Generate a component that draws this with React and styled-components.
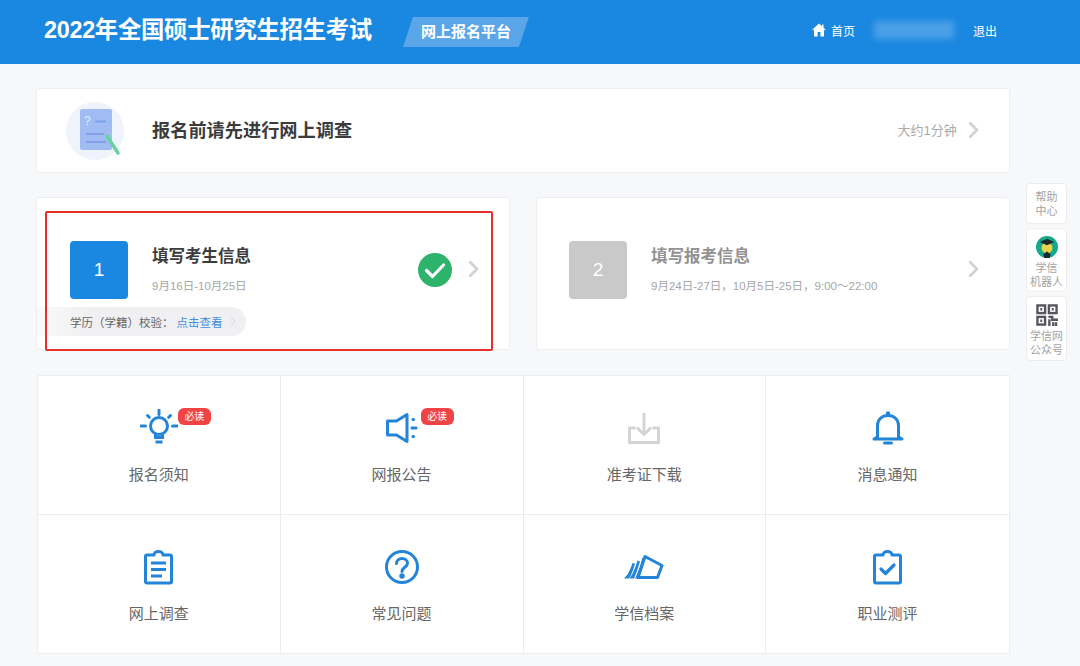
import React from 'react';
import styled, { createGlobalStyle } from 'styled-components';

const GlobalStyle = createGlobalStyle`
  * { box-sizing: border-box; }
  html, body { margin: 0; padding: 0; }
  body {
    background: #f7f8fa;
    color: #333;
    font-family: "Liberation Sans", "Noto Sans CJK SC", sans-serif;
  }
`;

const Page = styled.div`
  width: 1080px;
  height: 666px;
  overflow: hidden;
`;

const Header = styled.header`
  height: 64px;
  background: #1a87e0;
  display: flex;
  align-items: center;
  padding: 0 83px 4px 44px;
  color: #fff;
`;

const SiteTitle = styled.h1`
  margin: 0;
  font-size: 23.4px;
  line-height: 30px;
  font-weight: 700;
  letter-spacing: -0.3px;
`;

const PlatformTag = styled.div`
  margin: 4px 0 0 31px;
  width: 126px;
  height: 30px;
  line-height: 30px;
  text-align: center;
  font-size: 15px;
  font-weight: 700;
  background: #5ba6e8;
  clip-path: polygon(8% 0, 100% 0, 92% 100%, 0 100%);
`;

const Nav = styled.nav`
  margin-left: auto;
  display: flex;
  align-items: center;
  font-size: 12px;
`;

const HomeLink = styled.a`
  display: flex;
  align-items: center;
  gap: 5px;
  color: #fff;
`;

const BlurredName = styled.div`
  width: 80px;
  height: 18px;
  margin: 0 19px 0 19px;
  background: #4ba0e8;
  filter: blur(3px);
`;

const Body = styled.div`
  display: flex;
  padding: 24px 0 0 36px;
`;

const Main = styled.main`
  width: 974px;
  display: flex;
  flex-direction: column;
`;

const Card = styled.section`
  background: #fff;
  border: 1px solid #eceef1;
  border-radius: 3px;
`;

const SurveyCard = styled(Card)`
  height: 85px;
  display: flex;
  align-items: center;
  padding: 0 30px 0 29px;
`;

const SurveyTitle = styled.h2`
  margin: 0 0 4px 26px;
  font-size: 18.2px;
  font-weight: 700;
  color: #3c3c3c;
`;

const SurveyTime = styled.span`
  margin: 0 11px 2px auto;
  font-size: 13px;
  color: #aaa;
`;

const Steps = styled.div`
  display: grid;
  grid-template-columns: 474px 474px;
  justify-content: space-between;
  margin-top: 24px;
`;

const StepCard = styled(Card)`
  position: relative;
  height: 153px;
  padding-top: 43px;
`;

const StepRow = styled.div`
  display: flex;
  align-items: center;
  padding: 0 30px 0 ${(p) => p.$inset}px;
`;

const StepNumber = styled.div`
  width: 58px;
  height: 58px;
  border-radius: 4px;
  display: flex;
  align-items: center;
  justify-content: center;
  color: #fff;
  font-size: 19px;
  background: ${(p) => (p.$active ? '#1a87e0' : '#c9c9c9')};
`;

const StepText = styled.div`
  margin-left: 24px;
  margin-top: -1px;
`;

const StepTitle = styled.h3`
  margin: 0;
  font-size: 16.5px;
  line-height: 24px;
  font-weight: 700;
  color: ${(p) => (p.$active ? '#3c3c3c' : '#929292')};
`;

const StepDate = styled.p`
  margin: 9px 0 0;
  font-size: 11.5px;
  line-height: 18px;
  color: #a6a6a6;
`;

const StepEnd = styled.div`
  margin-left: auto;
  display: flex;
  align-items: center;
  gap: 16px;
`;

const VerifyPill = styled.div`
  width: 209px;
  height: 29px;
  margin-top: 8px;
  padding-left: 33px;
  display: flex;
  align-items: center;
  font-size: 11.5px;
  color: #666;
  background: linear-gradient(90deg, #fafafa 0, #f0f0f2 25%, #f0f0f2 100%);
  border-radius: 0 15px 15px 0;
`;

const VerifyLink = styled.a`
  color: #3f8fe0;
  margin: 0 7px 0 3px;
`;

const RedFrame = styled.div`
  position: absolute;
  left: 8px;
  top: 13px;
  width: 448px;
  height: 140px;
  border: 2px solid #e8302a;
  border-radius: 2px;
  pointer-events: none;
`;

const Shortcuts = styled(Card)`
  margin: 25px 0 0 1px;
  display: grid;
  grid-template-columns: repeat(4, 1fr);
  grid-template-rows: 139px 138px;
  border-radius: 0;
`;

const Shortcut = styled.a`
  display: flex;
  flex-direction: column;
  align-items: center;
  padding-top: 30px;
  font-size: 15px;
  color: #666;
  border-right: ${(p) => (p.$lastCol ? '0' : '1px solid #ececec')};
  border-bottom: ${(p) => (p.$lastRow ? '0' : '1px solid #ececec')};
`;

const IconSlot = styled.div`
  position: relative;
  width: 44px;
  height: 44px;
  display: flex;
  align-items: center;
  justify-content: center;
  margin-bottom: 13px;
`;

const Badge = styled.span`
  position: absolute;
  left: 41px;
  top: 2px;
  width: 33px;
  height: 17px;
  line-height: 17px;
  text-align: center;
  border-radius: 6px;
  background: #f04444;
  color: #fff;
  font-size: 10px;
`;

const SideRail = styled.aside`
  margin: 95px 0 0 16px;
  width: 41px;
  display: flex;
  flex-direction: column;
  gap: 4px;
`;

const SideItem = styled.a`
  display: flex;
  flex-direction: column;
  align-items: center;
  padding: ${(p) => p.$pad};
  background: #fff;
  border: 1px solid #ececee;
  border-radius: 4px;
  font-size: 11px;
  line-height: 14px;
  color: #a3a3a3;
  text-align: center;
`;

const SideIcon = styled.div`
  display: flex;
  height: ${(p) => p.$height}px;
  margin-bottom: ${(p) => p.$gap}px;
`;

const Chevron = ({ className, size = 14, color = '#d2d2d2', width = 2.4 }) => (
  <svg className={className} width={size * 0.7} height={size} viewBox="0 0 10 14" fill="none">
    <path d="M2 1l6 6-6 6" stroke={color} strokeWidth={width} strokeLinecap="round" strokeLinejoin="round" />
  </svg>
);

const RaisedChevron = styled(Chevron)`
  margin-bottom: ${(p) => p.$lift}px;
`;

const HomeIcon = () => (
  <svg width="14" height="14" viewBox="0 0 14 14" fill="#fff">
    <path d="M7 .5L.4 6.600l.7.8.9-.8V13.500h3.600V9h2.800v4.500H12V6.600l.9.8.7-.8-2.100-1.900V1.500H10v1.800z" />
  </svg>
);

const SurveyIcon = () => (
  <svg width="60" height="60" viewBox="0 0 60 60" fill="none">
    <circle cx="29" cy="30" r="29" fill="#eff3fb" />
    <rect x="14" y="8" width="32" height="41" rx="2" fill="#a0bcf3" />
    <text x="18" y="24" fontSize="12" fill="#e4ecfc" fontFamily="Liberation Sans">?</text>
    <path d="M29 20.500h11M20 33h18M20 41h20" stroke="#7f9fe6" strokeWidth="1.800" />
    <path d="M41 35l11 17" stroke="#67d39c" strokeWidth="3.500" strokeLinecap="round" />
  </svg>
);

const CheckBadge = () => (
  <svg width="34" height="34" viewBox="0 0 34 34">
    <circle cx="17" cy="17" r="17" fill="#2eb36b" />
    <path d="M8.500 17.500l6 6 11-11.500" fill="none" stroke="#fff" strokeWidth="3.200" strokeLinecap="round" strokeLinejoin="round" />
  </svg>
);

const BLUE = '#2384d8';

const BulbIcon = () => (
  <svg width="38" height="38" viewBox="0 0 38 38" fill="none" stroke={BLUE} strokeWidth="3">
    <circle cx="19" cy="17" r="8.500" />
    <path d="M15.500 25v3.500h7V25M15.500 33h7" />
    <path d="M19 1v4.500M7.500 6.500l1.800 1.800M30.500 6.500l-1.800 1.800M1 17h4.500M32.500 17H37" strokeLinecap="round" />
  </svg>
);

const SpeakerIcon = () => (
  <svg width="32" height="32" viewBox="0 0 32 32" fill="none" stroke={BLUE} strokeWidth="3" strokeLinejoin="round">
    <path d="M1.500 9h9L21 2.500v27L10.500 23h-9z" />
    <path d="M27 7.500h.5M26 16h4M27 24.500h.5" strokeWidth="3.200" strokeLinecap="round" />
  </svg>
);

const DownloadIcon = () => (
  <svg width="32" height="32" viewBox="0 0 32 32" fill="none" stroke="#d4d4d4" strokeWidth="3">
    <path d="M16 1v21M9 15.500l7 7 7-7" />
    <path d="M7.500 16h-6v14.500h29V16h-6" />
  </svg>
);

const BellIcon = () => (
  <svg width="32" height="36" viewBox="0 0 32 36" fill="none" stroke={BLUE} strokeWidth="3" strokeLinejoin="round">
    <circle cx="16" cy="3.500" r="1.500" fill={BLUE} strokeWidth="1.500" />
    <path d="M5.500 27V15.500C5.500 9.500 10 5.500 16 5.500s10.500 4 10.500 10V27l3.500 2H2z" />
    <path d="M12.500 33h7" strokeLinecap="round" />
  </svg>
);

const CLIP_OUTLINE = 'M11 5H4a1.500 1.500 0 0 0-1.500 1.500V31.500A1.500 1.500 0 0 0 4 33h23a1.500 1.500 0 0 0 1.500-1.500V6.500A1.500 1.500 0 0 0 27 5H20c0-2-2-3.500-4.500-3.500S11 3 11 5z';

const ClipboardIcon = () => (
  <svg width="31" height="35" viewBox="0 0 31 35" fill="none" stroke={BLUE} strokeWidth="3" strokeLinejoin="round">
    <path d={CLIP_OUTLINE} />
    <path d="M8 13h15M8 19.500h15M8 26h11" />
  </svg>
);

const QuestionIcon = () => (
  <svg width="34" height="34" viewBox="0 0 34 34" fill="none" stroke={BLUE} strokeWidth="3">
    <circle cx="17" cy="17" r="15.500" />
    <path d="M11.500 13.500c0-3 2.500-5 5.500-5s5.500 2 5.500 4.800c0 4-5.500 4-5.500 8.200" strokeLinecap="round" />
    <circle cx="17" cy="26" r="1.200" fill={BLUE} />
  </svg>
);

const BookIcon = () => (
  <svg width="40" height="26" viewBox="0 0 40 26" fill="none">
    <path d="M21 2.500l17 9-4.500 12H14z" stroke={BLUE} strokeWidth="3" strokeLinejoin="round" />
    <path d="M0 24.500C4 21 6.500 15 8.500 9l2.500.8C9.500 15 7.500 21 5 24.500zM5.500 24.500C9 20 11.500 13 13.500 6.500l2.500 1C14 14 12 20 10 24.500zM11 24.500C14 19 16.500 11 18.500 3.500l2.500 1C19 12 17 19 15 24.500z" fill={BLUE} />
  </svg>
);

const ChecklistIcon = () => (
  <svg width="31" height="35" viewBox="0 0 31 35" fill="none" stroke={BLUE} strokeWidth="3" strokeLinejoin="round">
    <path d={CLIP_OUTLINE} />
    <path d="M9 19l4.500 4.500 8.500-8.500" strokeWidth="3.200" strokeLinecap="round" />
  </svg>
);

const RobotAvatar = () => (
  <svg width="22" height="22" viewBox="0 0 24 24">
    <circle cx="12" cy="12" r="12" fill="#14a88c" />
    <circle cx="12" cy="13" r="6" fill="#e8d44a" />
    <path d="M4 6.500L12 3l8 3.500-8 3.500z" fill="#1c2a2e" />
    <path d="M8 20l4-3 4 3-1 4H9z" fill="#1c2a2e" />
  </svg>
);

const QrIcon = () => (
  <svg width="22" height="22" viewBox="0 0 23 23" fill="none" stroke="#55555f" strokeWidth="2.500">
    <rect x="1.500" y="1.500" width="8" height="8" />
    <rect x="13.500" y="1.500" width="8" height="8" />
    <rect x="1.500" y="13.500" width="8" height="8" />
    <path d="M4.500 5.500h2M16.500 5.500h2M4.500 17.500h2" />
    <path d="M13 13.500h4v3h6M14 16v7M18 19v4M21 19v4" />
  </svg>
);

const shortcuts = [
  { label: '报名须知', icon: <BulbIcon />, badge: true },
  { label: '网报公告', icon: <SpeakerIcon />, badge: true },
  { label: '准考证下载', icon: <DownloadIcon /> },
  { label: '消息通知', icon: <BellIcon /> },
  { label: '网上调查', icon: <ClipboardIcon /> },
  { label: '常见问题', icon: <QuestionIcon /> },
  { label: '学信档案', icon: <BookIcon /> },
  { label: '职业测评', icon: <ChecklistIcon /> },
];

export default function App() {
  return (
    <Page>
      <GlobalStyle />
      <Header>
        <SiteTitle>2022年全国硕士研究生招生考试</SiteTitle>
        <PlatformTag>网上报名平台</PlatformTag>
        <Nav>
          <HomeLink>
            <HomeIcon />
            首页
          </HomeLink>
          <BlurredName />
          <span>退出</span>
        </Nav>
      </Header>

      <Body>
        <Main>
          <SurveyCard>
            <SurveyIcon />
            <SurveyTitle>报名前请先进行网上调查</SurveyTitle>
            <SurveyTime>大约1分钟</SurveyTime>
            <RaisedChevron size={16} $lift={2} />
          </SurveyCard>

          <Steps>
            <StepCard>
              <StepRow $inset={33}>
                <StepNumber $active>1</StepNumber>
                <StepText>
                  <StepTitle $active>填写考生信息</StepTitle>
                  <StepDate>9月16日-10月25日</StepDate>
                </StepText>
                <StepEnd>
                  <CheckBadge />
                  <RaisedChevron size={16} $lift={3} />
                </StepEnd>
              </StepRow>
              <VerifyPill>
                学历（学籍）校验：
                <VerifyLink>点击查看</VerifyLink>
                <Chevron size={9} width={1.500} />
              </VerifyPill>
              <RedFrame />
            </StepCard>

            <StepCard>
              <StepRow $inset={32}>
                <StepNumber>2</StepNumber>
                <StepText>
                  <StepTitle>填写报考信息</StepTitle>
                  <StepDate>9月24日-27日，10月5日-25日，9:00～22:00</StepDate>
                </StepText>
                <StepEnd>
                  <RaisedChevron size={16} $lift={3} />
                </StepEnd>
              </StepRow>
            </StepCard>
          </Steps>

          <Shortcuts>
            {shortcuts.map((item, i) => (
              <Shortcut key={item.label} $lastCol={i % 4 === 3} $lastRow={i >= 4}>
                <IconSlot>
                  {item.icon}
                  {item.badge && <Badge>必读</Badge>}
                </IconSlot>
                {item.label}
              </Shortcut>
            ))}
          </Shortcuts>
        </Main>

        <SideRail>
          <SideItem $pad="6px 0 5px">
            帮助
            <br />
            中心
          </SideItem>
          <SideItem $pad="7px 0 2px">
            <SideIcon $height={21} $gap={4}>
              <RobotAvatar />
            </SideIcon>
            学信
            <br />
            机器人
          </SideItem>
          <SideItem $pad="7px 0 3px">
            <SideIcon $height={22} $gap={3}>
              <QrIcon />
            </SideIcon>
            学信网
            <br />
            公众号
          </SideItem>
        </SideRail>
      </Body>
    </Page>
  );
}
